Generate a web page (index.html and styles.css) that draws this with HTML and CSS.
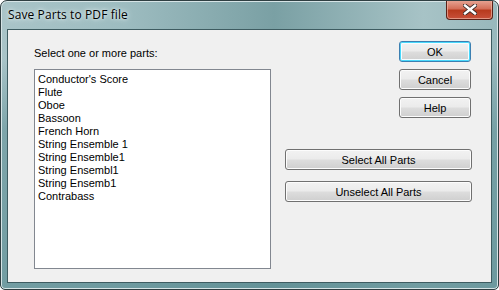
FILE: index.html
```html
<!DOCTYPE html>
<html lang="en">
<head>
  <meta charset="UTF-8">
  <title>Save Parts to PDF file</title>
  <link rel="stylesheet" href="styles.css">
</head>
<body>
  <div class="window">
    <div class="titlebar">
      <span class="title">Save Parts to PDF file</span>
      <button class="close-btn" title="Close">
        <svg width="14" height="11" viewBox="0 0 14 11">
          <path d="M2 1.5L12 9.5M12 1.5L2 9.5" stroke="#3a2a28" stroke-width="4.2" stroke-linecap="square"/>
          <path d="M2 1.5L12 9.5M12 1.5L2 9.5" stroke="#fff" stroke-width="2.4" stroke-linecap="square"/>
        </svg>
      </button>
    </div>
    <div class="client">
      <div class="left-col">
        <label class="prompt" for="parts">Select one or more parts:</label>
        <div class="listbox" id="parts">
          <div class="item">Conductor's Score</div>
          <div class="item">Flute</div>
          <div class="item">Oboe</div>
          <div class="item">Bassoon</div>
          <div class="item">French Horn</div>
          <div class="item">String Ensemble 1</div>
          <div class="item">String Ensemble1</div>
          <div class="item">String Ensembl1</div>
          <div class="item">String Ensemb1</div>
          <div class="item">Contrabass</div>
        </div>
      </div>
      <div class="right-col">
        <div class="main-buttons">
          <button class="btn default">OK</button>
          <button class="btn">Cancel</button>
          <button class="btn">Help</button>
        </div>
        <div class="wide-buttons">
          <button class="btn wide">Select All Parts</button>
          <button class="btn wide">Unselect All Parts</button>
        </div>
      </div>
    </div>
  </div>
</body>
</html>
```

FILE: styles.css
```css
body { margin: 0; padding: 0; background: #fff; font-family: 'Liberation Sans', Arial, sans-serif; }
.window { width: 499px; height: 290px; box-sizing: border-box; border: 1px solid #2f3f42; border-radius: 7px 7px 5px 5px; background: linear-gradient(180deg, rgba(255,255,255,0) 0%, rgba(255,255,255,0) 20%, rgba(90,140,146,0.55) 45%, rgba(90,140,146,0.7) 100%), linear-gradient(90deg, #a9c4c8 0%, #9dbcc0 25%, #7aa0a4 55%, #a7c3c6 85%, #98b8bc 100%); display: flex; flex-direction: column; overflow: hidden; box-shadow: inset 0 0 0 1px #d6e4e6; }
.titlebar { height: 28px; display: flex; align-items: flex-start; justify-content: space-between; padding: 0 5px 0 7px; flex-shrink: 0; }
.title { font-family: 'Open Sans', 'Noto Sans', sans-serif; font-size: 12px; color: #000; margin-top: 5px; letter-spacing: 0.1px; text-shadow: 0 0 6px #e8f2f3, 0 0 3px #e8f2f3; }
.close-btn { width: 47px; height: 20px; margin-top: -1px; border: 1px solid #5a2118; border-top: none; border-radius: 0 0 4px 4px; background: linear-gradient(180deg, #e8a898 0%, #d4705a 45%, #b83a1e 55%, #c8503a 100%); box-shadow: inset 0 0 0 1px #f0b8a8aa; display: flex; align-items: center; justify-content: center; padding: 0; }
.client { flex: 1; margin: 0 6px 6px 6px; border: 1px solid #3e5c61; background: #f0f0f0; display: flex; padding: 11px 0 0 26px; gap: 14px; font-size: 11px; }
.left-col { display: flex; flex-direction: column; }
.prompt { margin-top: 6px; height: 13px; line-height: 13px; color: #000; }
.listbox { margin-top: 9px; width: 237px; height: 200px; box-sizing: border-box; background: #fff; border: 1px solid #828790; padding: 3px 0 0 3px; }
.item { height: 13px; line-height: 13px; color: #000; white-space: nowrap; }
.right-col { width: 187px; display: flex; flex-direction: column; }
.main-buttons { display: flex; flex-direction: column; align-items: flex-end; gap: 7px; padding-right: 1px; }
.wide-buttons { display: flex; flex-direction: column; gap: 11px; margin-top: 31px; }
.btn { width: 72px; height: 21px; box-sizing: border-box; border: 1px solid #707070; border-radius: 3px; background: linear-gradient(180deg, #f2f2f2 0%, #ebebeb 48%, #dddddd 52%, #cfcfcf 100%); box-shadow: inset 0 0 0 1px #fcfcfc; font-family: 'Liberation Sans', Arial, sans-serif; font-size: 11px; color: #000; padding: 0; cursor: pointer; }
.btn.default { border-color: #3c7fb1; box-shadow: inset 0 0 0 1px #48d8fb, inset 0 0 0 2px #f6fcff; }
.btn.wide { width: 187px; }
```
